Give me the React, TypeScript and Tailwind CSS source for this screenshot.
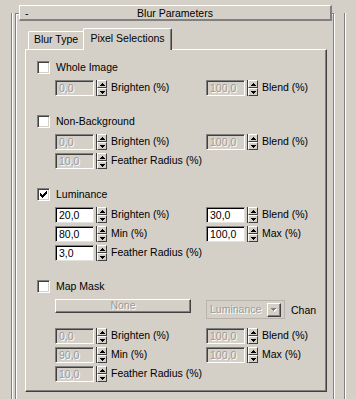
import React from 'react';

const face = 'bg-[#d4d0c8]';

function Check({ checked }: { checked?: boolean }) {
  return (
    <div className="flex h-[13px] w-[13px] items-center justify-center border-l border-t border-r border-b border-l-[#808080] border-t-[#808080] border-r-white border-b-white bg-white shadow-[inset_1px_1px_0_#404040,inset_-1px_-1px_0_#d4d0c8]">
      {checked && (
        <svg width="7" height="7" viewBox="0 0 7 7" shapeRendering="crispEdges">
          <path d="M0 2h1v3H0zM1 3h1v3H1zM2 4h1v3H2zM3 3h1v3H3zM4 2h1v3H4zM5 1h1v3H5zM6 0h1v3H6z" fill="#000" />
        </svg>
      )}
    </div>
  );
}

function Arrow({ up }: { up?: boolean }) {
  return (
    <div className="flex h-[8px] w-full items-center justify-center border-l border-t border-r border-b border-l-white border-t-white border-r-[#404040] border-b-[#404040]">
      <svg width="5" height="3" viewBox="0 0 5 3" shapeRendering="crispEdges">
        {up ? (
          <path d="M2 0h1v1H2zM1 1h3v1H1zM0 2h5v1H0z" fill="#000" />
        ) : (
          <path d="M0 0h5v1H0zM1 1h3v1H1zM2 2h1v1H2z" fill="#000" />
        )}
      </svg>
    </div>
  );
}

function Spin() {
  return (
    <div className={`ml-[2px] flex h-[16px] w-[11px] shrink-0 flex-col border-l border-l-[#404040] ${face}`}>
      <Arrow up />
      <Arrow />
    </div>
  );
}

function Edit({ value, off }: { value: string; off?: boolean }) {
  return off ? (
    <div className="h-[16px] w-[39px] shrink-0 border-l border-t border-r border-b border-l-[#808080] border-t-[#808080] border-r-white border-b-white bg-[#d4d0c8] pl-[3px] pt-[1px] text-[10.5px] leading-[13px] text-[#9a9a9a] shadow-[inset_1px_1px_0_#404040] [text-shadow:1px_1px_0_#fff]">
      {value}
    </div>
  ) : (
    <div className="h-[16px] w-[39px] shrink-0 border-l border-t border-r border-b border-l-[#808080] border-t-[#808080] border-r-[#e4e1da] border-b-[#e4e1da] bg-white pl-[3px] pt-[1px] text-[10.5px] leading-[13px] text-black shadow-[inset_1px_1px_0_#000]">
      {value}
    </div>
  );
}

function Field({ value, label, off }: { value: string; label: string; off?: boolean }) {
  return (
    <div className="flex w-[151px] shrink-0 items-center">
      <Edit value={value} off={off} />
      <Spin />
      <span className="ml-[4px] whitespace-nowrap">{label}</span>
    </div>
  );
}

function Row({ children, first }: { children: React.ReactNode; first?: boolean }) {
  return <div className={`${first ? 'mt-[6px]' : 'mt-[3px]'} ml-[18px] flex h-[16px] items-center`}>{children}</div>;
}

function CheckRow({ label, checked, first }: { label: string; checked?: boolean; first?: boolean }) {
  return (
    <div className={`${first ? 'mt-[11px]' : 'mt-[19px]'} flex h-[13px] items-center`}>
      <Check checked={checked} />
      <span className="ml-[6px]">{label}</span>
    </div>
  );
}

export default function App() {
  return (
    <div className={`h-[399px] w-[356px] overflow-hidden ${face} text-[10.5px] text-black [font-family:'Liberation_Sans',Arial,sans-serif]`}>
      <div className="ml-[11px] h-full w-[334px] border-l border-r border-[#808080] shadow-[inset_1px_0_0_#fff,1px_0_0_#fff]">
        <div className="ml-[3px] mt-[13px] h-[420px] w-[319px] border border-[#808080] shadow-[inset_1px_1px_0_#fff,1px_1px_0_#fff]">
          {/* rollout title */}
          <div className="-mt-[9px] ml-[3px] grid h-[16px] w-[313px] grid-cols-[1fr_auto_1fr] items-center border-l border-t border-r-2 border-b-2 border-l-white border-t-white border-r-[#808080] border-b-[#808080] bg-[#d4d0c8] leading-[12px]">
            <span className="pl-[5px]">-</span>
            <span>Blur Parameters</span>
            <span />
          </div>

          {/* tabs */}
          <div className="ml-[12px] mt-[7px] flex h-[21px] items-end">
            <div className="flex h-[18px] w-[55px] items-center justify-center rounded-tl-[2px] border-l border-t border-white pb-[1px]">
              Blur Type
            </div>
            <div className="relative z-10 -mb-[1px] flex h-[22px] w-[89px] items-center justify-center rounded-t-[2px] border-l border-t border-r border-l-white border-t-white border-r-[#404040] bg-[#d4d0c8] pb-[2px] shadow-[inset_-1px_0_0_#808080]">
              Pixel Selections
            </div>
          </div>

          {/* tab page */}
          <div className="ml-[9px] h-[343px] w-[302px] border-l border-t border-r border-b border-l-white border-t-white border-r-[#404040] border-b-[#404040] pl-[11px] shadow-[inset_-1px_-1px_0_#808080]">
            <CheckRow label="Whole Image" first />
            <Row first>
              <Field value="0,0" label="Brighten (%)" off />
              <Field value="100,0" label="Blend (%)" off />
            </Row>

            <CheckRow label="Non-Background" />
            <Row first>
              <Field value="0,0" label="Brighten (%)" off />
              <Field value="100,0" label="Blend (%)" off />
            </Row>
            <Row>
              <Field value="10,0" label="Feather Radius (%)" off />
            </Row>

            <CheckRow label="Luminance" checked />
            <Row first>
              <Field value="20,0" label="Brighten (%)" />
              <Field value="30,0" label="Blend (%)" />
            </Row>
            <Row>
              <Field value="80,0" label="Min (%)" />
              <Field value="100,0" label="Max (%)" />
            </Row>
            <Row>
              <Field value="3,0" label="Feather Radius (%)" />
            </Row>

            <CheckRow label="Map Mask" />
            <div className="ml-[18px] mt-[6px] flex h-[21px] items-start">
              <div className="w-[151px] shrink-0">
                <div className="flex h-[14px] w-[136px] items-center justify-center border-l border-t border-r border-b border-l-white border-t-white border-r-[#404040] border-b-[#404040] text-[#9a9a9a] shadow-[inset_-1px_-1px_0_#808080] [text-shadow:1px_1px_0_#fff]">
                  None
                </div>
              </div>
              <div className="mt-[1px] flex h-[19px] w-[79px] shrink-0 items-center justify-between border border-[#b8b4ac] bg-[#d4d0c8] pl-[3px] pr-[3px]">
                <span className="text-[#9a9a9a] [text-shadow:1px_1px_0_#fff]">Luminance</span>
                <div className="flex h-[14px] w-[14px] items-center justify-center border-l border-t border-r border-b border-l-white border-t-white border-r-[#404040] border-b-[#404040] shadow-[inset_-1px_-1px_0_#808080]">
                  <svg width="7" height="4" viewBox="0 0 7 4" shapeRendering="crispEdges">
                    <path d="M1 1h5v1H1zM2 2h3v1H2zM3 3h1v1H3z" fill="#fff" />
                    <path d="M0 0h5v1H0zM1 1h3v1H1zM2 2h1v1H2z" fill="#808080" />
                  </svg>
                </div>
              </div>
              <span className="ml-[6px] mt-[4px] whitespace-nowrap">Chan</span>
            </div>
            <div className="mt-[8px] ml-[18px] flex h-[16px] items-center">
              <Field value="0,0" label="Brighten (%)" off />
              <Field value="100,0" label="Blend (%)" off />
            </div>
            <Row>
              <Field value="90,0" label="Min (%)" off />
              <Field value="100,0" label="Max (%)" off />
            </Row>
            <Row>
              <Field value="10,0" label="Feather Radius (%)" off />
            </Row>
          </div>
        </div>
      </div>
    </div>
  );
}
